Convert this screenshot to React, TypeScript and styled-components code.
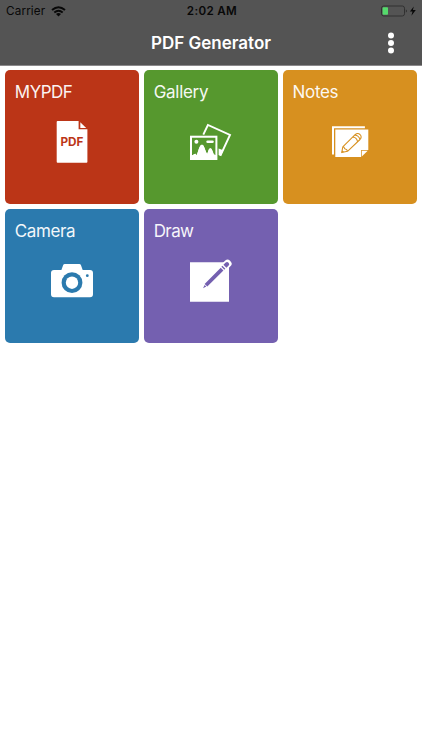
import React from "react";
import styled, { createGlobalStyle } from "styled-components";

const GlobalStyle = createGlobalStyle`
  * { box-sizing: border-box; }
  body {
    margin: 0;
    background: #fff;
    font-family: Inter, "Liberation Sans", sans-serif;
    overflow: hidden;
  }
  svg { display: block; flex: none; }
`;

const Screen = styled.main`
  height: 750px;
  width: 422px;
  background: #fff;
`;

const Header = styled.header`
  height: 66px;
  background: #545454;
  border-bottom: 1px solid #8b898b;
`;

const StatusBar = styled.div`
  height: 22px;
  padding: 0 4px 0 6px;
  display: grid;
  grid-template-columns: 1fr auto 1fr;
  align-items: center;
  color: #080808;
  font-size: 11.7px;
`;

const Carrier = styled.div`
  display: flex;
  align-items: center;
  gap: 6px;
  letter-spacing: 0.15px;
`;

const Clock = styled.div`
  font-weight: 600;
  font-size: 11.6px;
  letter-spacing: 0.35px;
`;

const Power = styled.div`
  display: flex;
  justify-content: flex-end;
`;

const NavBar = styled.div`
  height: 42px;
  display: grid;
  grid-template-columns: 62px 1fr 62px;
  align-items: center;
  justify-items: center;
`;

const Title = styled.h1`
  margin: 0;
  color: #fff;
  font-size: 17px;
  line-height: 22px;
  font-weight: 600;
  white-space: nowrap;
`;

const MenuButton = styled.button`
  border: 0;
  padding: 0;
  background: transparent;
`;

const TileGrid = styled.div`
  display: grid;
  grid-template-columns: repeat(3, 133.6px);
  grid-auto-rows: 133.6px;
  gap: 5.3px;
  padding: 4.4px 5.3px;
`;

const Tile = styled.button<{ $color: string }>`
  display: flex;
  flex-direction: column;
  align-items: center;
  gap: 14.5px;
  padding: 11px 9.5px;
  border: 0;
  border-radius: 5px;
  background: ${(p) => p.$color};
  color: #fff;
  font-family: inherit;
`;

const Label = styled.span<{ $spacing: number }>`
  align-self: flex-start;
  font-size: 17px;
  line-height: 22px;
  letter-spacing: ${(p) => p.$spacing}px;
  opacity: 0.94;
`;

const PdfText = styled.text`
  font-family: Inter, sans-serif;
  font-size: 11.2px;
  font-weight: 700;
`;

type IconProps = { ink: string };

const PdfIcon = ({ ink }: IconProps) => (
  <svg width="48" height="48" viewBox="0 0 48 48" fill="#fff">
    <path d="M9.6 3H30.6V11.2H39.4V43.8Q39.4 44.7 38.5 44.7H9.6Q8.7 44.7 8.7 43.8V3.9Q8.7 3 9.6 3Z" />
    <path d="M32.3 4.2 38.2 9.9H32.3Z" />
    <PdfText x="24" y="28" textAnchor="middle" textLength="23" lengthAdjust="spacingAndGlyphs" fill={ink}>PDF</PdfText>
  </svg>
);

const GalleryIcon = ({ ink }: IconProps) => (
  <svg width="48" height="48" viewBox="0 0 48 48">
    <path d="M16.3 16.7 20.9 7 43 17 33.7 36.9 32.2 36.2" fill="none" stroke="#fff" strokeWidth="1.9" />
    <path d="M31.6 30.6 36.3 32.2 33.9 37.8 31.6 37Z" fill="#fff" />
    <path d="M3 17.7H30.4V42H3Z" fill="#fff" />
    <path d="M5 19.8H28.4V37.1L26.8 36.5C25.5 33.2 24.9 30.5 23.4 30.3C21.8 30.3 21.4 33.2 20.2 36.1C18 33 17.4 26.7 15 26.7C12.1 26.7 11.5 34 9.5 37.2L8.4 35.7C7.1 35.7 6.4 37.2 5 37.4Z" fill={ink} />
    <path d="M5 37.4C6.4 37.2 7.1 35.7 8.4 35.7L9.5 37.2C11.5 34 12.1 26.7 15 26.7C17.4 26.7 18 33 20.2 36.1C21.4 33.2 21.8 30.3 23.4 30.3C24.9 30.5 25.5 33.2 26.8 36.5L28.4 37.1V41H5Z" fill="#fff" />
    <circle cx="9.4" cy="23.8" r="2" fill="#fff" />
    <rect x="19.3" y="22.4" width="7.5" height="2.7" rx="1.35" fill="#fff" />
  </svg>
);

const NotesIcon = ({ ink }: IconProps) => (
  <svg width="48" height="48" viewBox="0 0 48 48">
    <path d="M6 8.3H38.9V10.3H8V36.4H6Z" fill="#fff" />
    <path d="M9.3 11.6H42.3V32H35.1V39H9.3Z" fill="#fff" />
    <path d="M35.8 32.8H41.7L35.8 38.6Z" fill="#fff" />
    <g fill="none" stroke={ink} strokeWidth="1.05" strokeLinejoin="round">
      <path d="M15.7 34.6 16.8 28.8 29.1 16.7Q31.6 14.3 34 16.5Q36.3 18.8 34 21.5L21.5 33.3ZM26.8 18.9Q30.7 19.1 31.6 23.8M28.9 16.9Q33 17.6 33.9 21.5M16.8 28.8Q18.2 28.8 18.8 30.8Q21.2 31.2 21.5 33.3" />
    </g>
    <path d="M15.7 34.6 16.2 32.2 18.2 34.1Z" fill={ink} />
  </svg>
);

const CameraIcon = ({ ink }: IconProps) => (
  <svg width="48" height="48" viewBox="0 0 48 48" fill="#fff">
    <path d="M6 13.1H13.4L15.2 8.1Q15.6 7 16.8 7H31.3Q32.5 7 32.9 8.1L34.7 13.1H42Q45 13.1 45 16.1V37.3Q45 40.3 42 40.3H6Q3 40.3 3 37.3V16.1Q3 13.1 6 13.1Z" />
    <circle cx="24" cy="25.7" r="10.4" fill={ink} />
    <circle cx="24" cy="25.7" r="6.2" />
    <circle cx="39.3" cy="18.7" r="1.4" fill={ink} />
  </svg>
);

const DrawIcon = ({ ink }: IconProps) => (
  <svg width="48" height="48" viewBox="0 0 48 48">
    <path d="M3 5.3H42V44.7H3Z" fill="#fff" />
    <g transform="translate(16 31.2) rotate(-45)">
      <rect x="26" y="-3.8" width="12.5" height="7.6" rx="3.2" fill="#fff" />
      <path d="M0 0 3.5-1.2V1.2ZM4.2-1.9H27V1.9H4.2Z" fill={ink} />
      <path d="M28.1-2.1H29.5V2.1H28.1ZM31-2.1H34.2Q36.1-2.1 36.1 0Q36.1 2.1 34.2 2.1H31Z" fill={ink} />
    </g>
  </svg>
);

const WifiIcon = () => (
  <svg width="15" height="11" viewBox="0 0 15 11" fill="none" stroke="#080808" strokeWidth="1.9">
    <path d="M1 4Q7.5-1.7 14 4M3.3 6.5Q7.5 2.9 11.7 6.5" />
    <path d="M5 8Q7.5 6 10 8L7.5 10.5Z" fill="#080808" stroke="none" />
  </svg>
);

const BatteryIcon = () => (
  <svg width="38" height="12" viewBox="0 0 38 12">
    <rect x="1.5" y="1" width="23" height="10" rx="2.2" fill="none" stroke="#303030" />
    <rect x="2.6" y="2.2" width="5.4" height="7.6" rx=".8" fill="#55da6c" />
    <path d="M25.8 4.4Q27 4.6 27 6Q27 7.4 25.8 7.6Z" fill="#303030" />
    <path d="M33.8 1.4 29.9 6.5H32.5L31.4 10.7 35.8 5.1H32.9Z" fill="#080808" />
  </svg>
);

const MoreIcon = () => (
  <svg width="8" height="22" viewBox="0 0 8 22" fill="#fff">
    <circle cx="4" cy="3.4" r="3" />
    <circle cx="4" cy="11" r="3" />
    <circle cx="4" cy="18.5" r="3" />
  </svg>
);

const tiles = [
  { label: "MYPDF", color: "#bb3517", spacing: -0.5, Icon: PdfIcon },
  { label: "Gallery", color: "#56982e", spacing: -0.3, Icon: GalleryIcon },
  { label: "Notes", color: "#d7901f", spacing: -0.35, Icon: NotesIcon },
  { label: "Camera", color: "#2b7aae", spacing: -0.4, Icon: CameraIcon },
  { label: "Draw", color: "#7460b0", spacing: -0.6, Icon: DrawIcon },
];

export default function App() {
  return (
    <Screen>
      <GlobalStyle />
      <Header>
        <StatusBar>
          <Carrier>Carrier<WifiIcon /></Carrier>
          <Clock>2:02 AM</Clock>
          <Power><BatteryIcon /></Power>
        </StatusBar>
        <NavBar>
          <span />
          <Title>PDF Generator</Title>
          <MenuButton aria-label="More options"><MoreIcon /></MenuButton>
        </NavBar>
      </Header>
      <TileGrid>
        {tiles.map(({ label, color, spacing, Icon }) => (
          <Tile key={label} $color={color}>
            <Label $spacing={spacing}>{label}</Label>
            <Icon ink={color} />
          </Tile>
        ))}
      </TileGrid>
    </Screen>
  );
}
